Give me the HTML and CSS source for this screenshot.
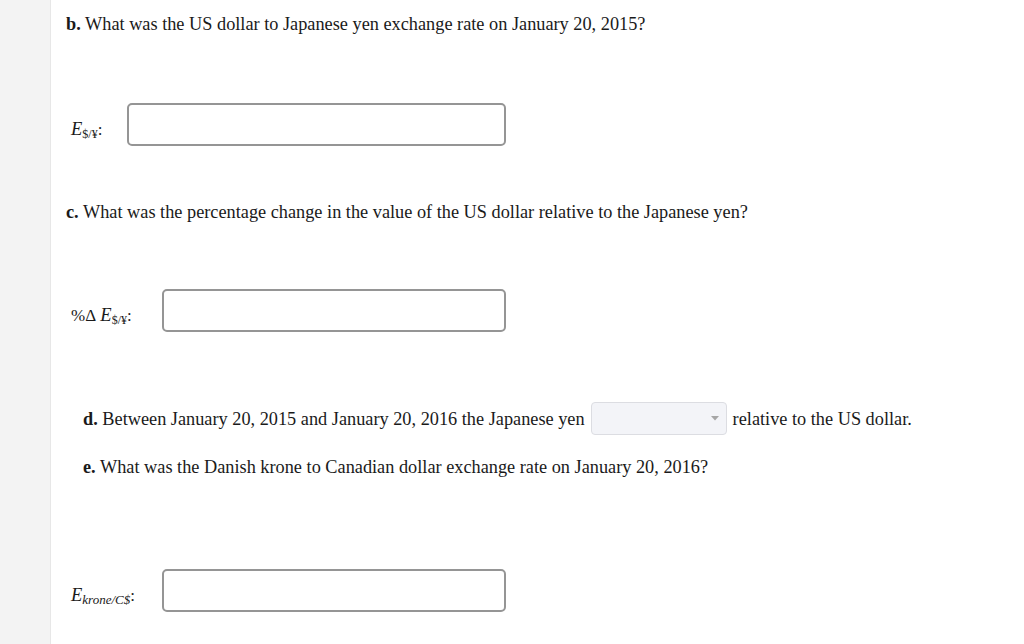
FILE: index.html
```html
<!DOCTYPE html>
<html>
<head>
<meta charset="utf-8">
<link rel="stylesheet" href="styles.css">
</head>
<body>
<div class="page">
  <div class="strip"></div>
  <main class="main">
    <p class="q q-b"><b>b.</b> What was the US dollar to Japanese yen exchange rate on January 20, 2015?</p>
    <div class="row row-1">
      <span class="lbl"><i class="E">E</i><sub class="sub">$/¥</sub>:</span>
      <span class="inp"></span>
    </div>
    <p class="q q-c"><b>c.</b> What was the percentage change in the value of the US dollar relative to the Japanese yen?</p>
    <div class="row row-2">
      <span class="lbl">%Δ&nbsp;<i class="E">E</i><sub class="sub">$/¥</sub>:</span>
      <span class="inp"></span>
    </div>
    <div class="q q-d">
      <span><b>d.</b> Between January 20, 2015 and January 20, 2016 the Japanese yen</span>
      <span class="sel"><svg class="caret" width="8" height="5" viewBox="0 0 8 5"><path d="M0 0H8L4 4.5Z" fill="#a6a6a6"/></svg></span>
      <span>relative to the US dollar.</span>
    </div>
    <p class="q q-e"><b>e.</b> What was the Danish krone to Canadian dollar exchange rate on January 20, 2016?</p>
    <div class="row row-3">
      <span class="lbl"><i class="E">E</i><sub class="sub ital">krone/C$</sub>:</span>
      <span class="inp"></span>
    </div>
  </main>
</div>
</body>
</html>
```

FILE: styles.css
```css
html, body {
  margin: 0;
  padding: 0;
  background: #fff;
}
body {
  font-family: "Liberation Serif", "Times New Roman", serif;
  font-size: 18.3px;
  color: #1a1a1a;
  width: 1024px;
  height: 644px;
  overflow: hidden;
}
.page {
  display: flex;
  height: 644px;
}
.strip {
  width: 50px;
  flex: none;
  background: #f3f3f3;
  border-right: 1px solid #e7e7e7;
}
.main {
  flex: 1;
  padding-left: 15px;
}
.q {
  margin: 0;
  line-height: 20px;
}
.q b { font-weight: bold; }
.q-b { margin-top: 14px; }
.row {
  display: flex;
  align-items: center;
  width: 435px;
  margin-left: 5px;
}
.lbl {
  flex: none;
  white-space: nowrap;
  font-size: 17px;
  padding-top: 10px;
}
.E {
  font-style: italic;
  font-size: 18.5px;
}
.sub {
  font-size: 12px;
  vertical-align: -3px;
  line-height: 0;
}
.sub.ital {
  font-style: italic;
  font-size: 13px;
}
.inp {
  flex: 1;
  height: 39px;
  border: 2px solid #959595;
  border-radius: 5px;
  background: #fff;
}
.row-1 { margin-top: 69px; }
.row-1 .inp { margin-left: 25px; }
.q-c { margin-top: 56px; }
.row-2 { margin-top: 67px; }
.row-2 .inp { margin-left: 30px; }
.q-d {
  display: flex;
  align-items: center;
  margin-top: 70px;
  margin-left: 17px;
}
.sel {
  display: flex;
  align-items: center;
  justify-content: flex-end;
  box-sizing: border-box;
  width: 136px;
  height: 33px;
  margin: 0 6px 0 6px;
  padding-right: 7px;
  background: #f3f4f8;
  border: 1px solid #dcdde2;
  border-radius: 4px;
}
.q-e {
  margin-left: 17px;
  margin-top: 22px;
}
.row-3 { margin-top: 92px; }
.row-3 .inp { margin-left: 27px; }
```
